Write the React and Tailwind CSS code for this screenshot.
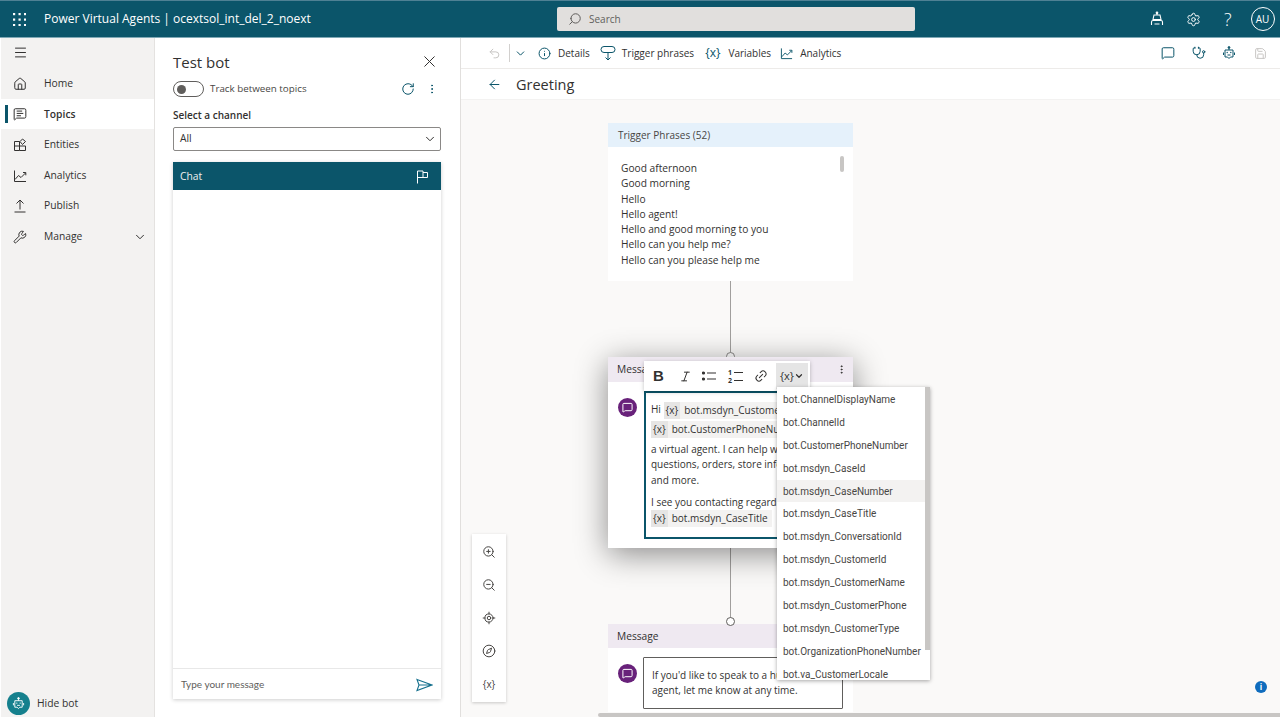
import React from "react";
import {
  ArrowLeft,
  ChevronDown,
  Home,
  Info,
  Italic,
  Link2,
  Menu,
  RotateCw,
  MoreVertical,
  Search,
  Settings,
  Wrench,
  X,
  ZoomIn,
  ZoomOut,
  Save,
  Undo2,
  LocateFixed,
  Compass,
  Stethoscope,
  MessageSquare,
  MessageSquareText,
} from "lucide-react";

const EntitiesIcon = ({ size = 14 }) => (
  <svg width={size} height={size} viewBox="0 0 14 14" fill="none" stroke="currentColor" strokeWidth="1">
    <path d="M1.500 3.500h5v9h-5zM1.500 8h11v4.500h-6M9.500 1l3 2.500-3 3-2.500-3z" />
  </svg>
);

const TrendIcon = ({ size = 14, color = "currentColor" }) => (
  <svg width={size} height={size} viewBox="0 0 14 14" fill="none" stroke={color} strokeWidth="1">
    <path d="M1.500 1.500v11h11.500M2 10.500l3.500-4 2.500 2 4.500-4.500M10 3.500h2.800v2.800" />
  </svg>
);

const PublishIcon = ({ size = 14 }) => (
  <svg width={size} height={size} viewBox="0 0 14 14" fill="none" stroke="currentColor" strokeWidth="1">
    <path d="M7 10.500V1M3.500 4.500L7 1l3.500 3.500M1.500 13h11" />
  </svg>
);

const navItems = [
  { label: "Home", icon: <Home size={14} strokeWidth={1} absoluteStrokeWidth /> },
  { label: "Topics", icon: <MessageSquareText size={14} strokeWidth={1} absoluteStrokeWidth />, active: true },
  { label: "Entities", icon: <EntitiesIcon /> },
  { label: "Analytics", icon: <TrendIcon /> },
  { label: "Publish", icon: <PublishIcon /> },
  { label: "Manage", icon: <Wrench size={14} strokeWidth={1} absoluteStrokeWidth />, chevron: true },
];

const phrases = [
  "Good afternoon",
  "Good morning",
  "Hello",
  "Hello agent!",
  "Hello and good morning to you",
  "Hello can you help me?",
  "Hello can you please help me",
];

const variables = [
  "bot.ChannelDisplayName",
  "bot.ChannelId",
  "bot.CustomerPhoneNumber",
  "bot.msdyn_CaseId",
  "bot.msdyn_CaseNumber",
  "bot.msdyn_CaseTitle",
  "bot.msdyn_ConversationId",
  "bot.msdyn_CustomerId",
  "bot.msdyn_CustomerName",
  "bot.msdyn_CustomerPhone",
  "bot.msdyn_CustomerType",
  "bot.OrganizationPhoneNumber",
  "bot.va_CustomerLocale",
];

const GridDots = () => (
  <svg width="13" height="13" viewBox="0 0 13 13" fill="white">
    {[1, 6.500, 12].map((y) =>
      [1, 6.500, 12].map((x) => <rect key={`${x}-${y}`} x={x - 1} y={y - 1} width="2.200" height="2.200" />)
    )}
  </svg>
);

const TriggerIcon = () => (
  <svg width="16" height="16" viewBox="0 0 16 16" fill="none" stroke="#0b556a" strokeWidth="1">
    <rect x="1" y="1.500" width="14" height="6" rx="3" />
    <path d="M8 7.500V15M5.500 12.500L8 15l2.500-2.500" />
  </svg>
);

const HeaderBot = () => (
  <svg width="16" height="16" viewBox="0 0 16 16" fill="none" stroke="white" strokeWidth="1.100">
    <circle cx="8" cy="1.800" r="0.800" fill="white" />
    <path d="M8 2.500v1.500M5 4h6l1 4.500H4zM2.500 14v-3a1.500 1.500 0 0 1 1.500-1.500h8a1.500 1.500 0 0 1 1.500 1.500v3M5.500 13h5" />
  </svg>
);

const RobotFace = ({ color, size = 14 }) => (
  <svg width={size} height={size} viewBox="0 0 14 14" fill="none" stroke={color} strokeWidth="1">
    <circle cx="7" cy="1.500" r="0.900" fill={color} />
    <path d="M7 2.500V4M3 4h8v7H8.500L7 12.500 5.500 11H3zM1.500 6.500v2.500M12.500 6.500v2.500M5.500 9h3" />
    <circle cx="5.200" cy="6.500" r="0.700" fill={color} stroke="none" />
    <circle cx="8.800" cy="6.500" r="0.700" fill={color} stroke="none" />
  </svg>
);

const FlagIcon = () => (
  <svg width="13" height="14" viewBox="0 0 13 14" fill="none" stroke="white" strokeWidth="1">
    <path d="M1.500 13.500V1h5.500v6.500H1.500M7 2.500h4.500v5H7" />
  </svg>
);

const SendIcon = () => (
  <svg width="17" height="14" viewBox="0 0 17 14" fill="none" stroke="#15708d" strokeWidth="1.100">
    <path d="M1 1.500L16 7 1 12.500 3 7zM3 7h13" />
  </svg>
);

const BulletsIcon = () => (
  <svg width="14" height="12" viewBox="0 0 14 12" fill="#323130" stroke="#323130" strokeWidth="1.200">
    <circle cx="1.500" cy="3" r="1" />
    <circle cx="1.500" cy="9" r="1" />
    <path d="M5 3h9M5 9h9" />
  </svg>
);

const NumbersIcon = () => (
  <div className="flex w-[15px] flex-col text-[7px] leading-[7px] font-bold">
    <div className="flex items-center gap-[2px]">1<div className="h-px flex-1 bg-[#323130]" /></div>
    <div className="mt-[1px] flex items-center gap-[2px]">2<div className="h-px flex-1 bg-[#323130]" /></div>
  </div>
);

const Chip = ({ children }) => (
  <span className="inline-flex h-[17px] items-center bg-[#f3f2f1] pr-1 align-middle">
    <span className="mr-[4px] bg-[#e6e5e4] px-[2px] leading-[17px]">{"{x}"}</span>
    {children}
  </span>
);

const Avatar = () => (
  <div className="mt-[7px] flex h-[19px] w-[19px] shrink-0 items-center justify-center rounded-full bg-[#68217a]">
    <MessageSquare size={11} color="white" strokeWidth={1} absoluteStrokeWidth />
  </div>
);

const App = () => {
  return (
    <div
      className="flex h-[720px] w-[1280px] flex-col overflow-hidden bg-white text-[#323130]"
      style={{ fontFamily: '"Open Sans", sans-serif' }}
    >
      {/* top bar */}
      <div className="flex h-[38px] shrink-0 items-center border-t border-t-[#4f8194] border-b border-b-[#7fa8b5] bg-[#0b556a] pl-[13px] text-white">
        <GridDots />
        <div className="ml-[18px] w-[513px] text-[12px] whitespace-nowrap">Power Virtual Agents | ocextsol_int_del_2_noext</div>
        <div className="flex h-[24px] w-[358px] items-center rounded-[2px] bg-[#e1dfdd] pl-[11px] text-[10px] text-[#605e5c]">
          <Search size={14} strokeWidth={1} absoluteStrokeWidth className="-scale-x-100" />
          <span className="ml-[7px]">Search</span>
        </div>
        <div className="ml-[234px] flex items-center">
          <HeaderBot />
          <Settings size={15} strokeWidth={1} absoluteStrokeWidth className="ml-[21px]" />
          <span className="ml-[23px] text-[18px] leading-none font-light">?</span>
          <div className="ml-[19px] flex h-[24px] w-[24px] items-center justify-center rounded-full border border-white text-[10px]">AU</div>
        </div>
      </div>

      <div className="flex min-h-0 flex-1 pb-[3px] pl-[1px]">
        {/* nav */}
        <div className="flex w-[154px] shrink-0 flex-col border-r border-r-[#e4e2e0] bg-[#f3f2f1]">
          <div className="flex h-[29px] shrink-0 items-center pl-[12px]">
            <Menu size={15} strokeWidth={1} absoluteStrokeWidth />
          </div>
          <div className="mt-[1px] flex flex-col">
            {navItems.map((item) => (
              <div key={item.label} className={`relative flex h-[30.600px] items-center pt-[1px] pl-[12px] text-[10.300px] ${item.active ? "bg-white font-semibold" : ""}`}>
                {item.active && <div className="absolute top-[6px] left-[4px] h-[18px] w-[3px] bg-[#0b556a]" />}
                {item.icon}
                <span className="ml-[17px]">{item.label}</span>
                {item.chevron && <ChevronDown size={14} strokeWidth={1} absoluteStrokeWidth className="ml-auto mr-[7px]" />}
              </div>
            ))}
          </div>
          <div className="mt-auto mb-[2px] flex items-center pl-[6px] text-[10.300px]">
            <div className="flex h-[23px] w-[23px] items-center justify-center rounded-full bg-[#15808d]">
              <RobotFace color="white" size={13} />
            </div>
            <span className="ml-[7px]">Hide bot</span>
          </div>
        </div>

        {/* test bot panel */}
        <div className="flex w-[306px] shrink-0 flex-col border-r border-r-[#e1dfdd] pr-[19px] pb-[18px] pl-[18px]">
          <div className="flex h-[43px] shrink-0 items-start justify-between pt-[14px]">
            <span className="text-[15px] leading-[20px]">Test bot</span>
            <X size={19} strokeWidth={1} absoluteStrokeWidth className="mr-[2px]" />
          </div>
          <div className="flex h-[16px] items-center">
            <div className="flex h-[16px] w-[31px] items-center rounded-full border border-[#605e5c] pl-[3px]">
              <div className="h-[9px] w-[9px] rounded-full bg-[#605e5c]" />
            </div>
            <span className="ml-[6px] text-[9.800px] text-[#484644]">Track between topics</span>
            <RotateCw size={14} strokeWidth={1} absoluteStrokeWidth color="#0b556a" className="ml-auto mr-[11px]" />
            <MoreVertical size={12} strokeWidth={1} absoluteStrokeWidth color="#0b556a" className="mr-[3px]" />
          </div>
          <div className="mt-[11px] text-[10px] font-semibold">Select a channel</div>
          <div className="mt-[4px] flex h-[24px] items-center justify-between rounded-[2px] border border-[#8a8886] pr-[3px] pl-[6px] text-[10.300px]">
            All
            <ChevronDown size={14} strokeWidth={1} absoluteStrokeWidth />
          </div>
          <div className="mt-[11px] flex min-h-0 flex-1 flex-col shadow-[0_1px_4px_rgba(0,0,0,0.2)]">
            <div className="flex h-[28px] shrink-0 items-center justify-between bg-[#0b556a] pt-[2px] pr-[12px] pl-[7px] text-[10.300px] text-[#f0f0f0]">
              Chat
              <FlagIcon />
            </div>
            <div className="flex-1" />
            <div className="flex h-[31px] shrink-0 items-center justify-between border-t border-t-[#e8e8e8] pt-[1px] pr-[8px] pl-[8px] text-[10px] text-[#605e5c]" style={{ fontFamily: "Lato, sans-serif" }}>
              Type your message
              <SendIcon />
            </div>
          </div>
        </div>

        {/* editor */}
        <div className="flex min-w-0 flex-1 flex-col">
          <div className="flex h-[31px] shrink-0 items-center border-b border-b-[#edebe9] pl-[27px] text-[10px]">
            <Undo2 size={13} strokeWidth={1} absoluteStrokeWidth color="#c8c6c4" />
            <div className="ml-[8px] h-[18px] w-px bg-[#d2d0ce]" />
            <ChevronDown size={13} strokeWidth={1} absoluteStrokeWidth className="ml-[4px]" color="#0b556a" />
            <Info size={13} strokeWidth={1} absoluteStrokeWidth color="#0b556a" className="ml-[11px]" />
            <span className="ml-[7px]">Details</span>
            <span className="ml-[10px]"><TriggerIcon /></span>
            <span className="ml-[6px]">Trigger phrases</span>
            <span className="ml-[11px] text-[12px] text-[#0b556a]">{"{x}"}</span>
            <span className="ml-[8px]">Variables</span>
            <span className="ml-[9px]"><TrendIcon size={13} color="#0b556a" /></span>
            <span className="ml-[7px]">Analytics</span>
            <div className="ml-auto flex items-center pr-[13px]">
              <MessageSquare size={14} strokeWidth={1} absoluteStrokeWidth color="#0b556a" />
              <Stethoscope size={14} strokeWidth={1} absoluteStrokeWidth color="#0b556a" className="ml-[17px]" />
              <span className="ml-[16px]"><RobotFace color="#0b556a" /></span>
              <Save size={13} strokeWidth={1} absoluteStrokeWidth color="#c8c6c4" className="ml-[18px]" />
            </div>
          </div>
          <div className="flex h-[31px] shrink-0 items-center border-b border-b-[#f3f2f1] pl-[26px]">
            <ArrowLeft size={15} strokeWidth={1} absoluteStrokeWidth color="#0b556a" />
            <span className="ml-[14px] pt-[2px] text-[14.500px]">Greeting</span>
          </div>

          {/* canvas */}
          <div className="relative min-h-0 flex-1 overflow-hidden bg-[#faf9f8]">
            <div className="ml-[147px] flex w-[245px] flex-col pt-[23px] text-[10.200px]">
              <div className="relative h-[158px] shrink-0 bg-white">
                <div className="flex h-[24px] items-center bg-[#e5f1fb] pl-[10px] text-[10px] text-[#484644]">Trigger Phrases (52)</div>
                <div className="mt-[14px] pl-[13px] leading-[15.300px]">
                  {phrases.map((p) => (
                    <div key={p}>{p}</div>
                  ))}
                </div>
                <div className="absolute top-[33px] right-[9px] h-[16px] w-[4px] rounded-full bg-[#c8c6c4]" />
              </div>

              <div className="relative mx-auto h-[76px] w-px shrink-0 bg-[#a19f9d]">
                <div className="absolute bottom-[-4px] left-[-4px] h-[9px] w-[9px] rounded-full border border-[#8a8886] bg-white" />
              </div>

              <div className="relative z-10 flex h-[191px] shrink-0 flex-col bg-white shadow-[0_6px_30px_rgba(0,0,0,0.45)]">
                <div className="flex h-[25px] shrink-0 items-center justify-between bg-[#efe9f1] pr-[6px] pl-[9px]">
                  Message
                  <MoreVertical size={11} strokeWidth={1} absoluteStrokeWidth />
                </div>
                <div className="flex pt-[9px] pl-[10px]">
                  <Avatar />
                  <div className="ml-[7px] h-[148px] w-[199px] overflow-hidden border-2 border-[#0b556a] pt-[9px] pl-[5px] text-[10px] leading-[15.300px] whitespace-nowrap">
                    <div className="h-[19px]">Hi <Chip>bot.msdyn_CustomerName</Chip></div>
                    <div className="h-[19px]"><Chip>bot.CustomerPhoneNumber</Chip></div>
                    <div className="mt-[2px]">a virtual agent. I can help with</div>
                    <div>questions, orders, store info</div>
                    <div>and more.</div>
                    <div className="mt-[7px]">I see you contacting regarding</div>
                    <div><Chip>bot.msdyn_CaseTitle</Chip></div>
                  </div>
                </div>
              </div>

              <div className="relative mx-auto h-[76px] w-px shrink-0 bg-[#a19f9d]">
                <div className="absolute bottom-[-2px] left-[-4px] h-[9px] w-[9px] rounded-full border border-[#605e5c] bg-white" />
              </div>

              <div className="flex h-[88px] shrink-0 flex-col bg-white">
                <div className="flex h-[24px] shrink-0 items-center bg-[#efe9f1] pt-[1px] pl-[9px]">Message</div>
                <div className="flex pt-[9px] pl-[10px]">
                  <Avatar />
                  <div className="ml-[6px] h-[52px] w-[200px] rounded-[1px] border border-[#605e5c] pt-[10px] pl-[8px] text-[10px] leading-[15.300px] whitespace-nowrap">
                    <div>If you'd like to speak to a human</div>
                    <div>agent, let me know at any time.</div>
                  </div>
                </div>
              </div>
            </div>

            {/* format toolbar */}
            <div className="absolute top-[261px] left-[183px] z-20 flex h-[30px] w-[166px] items-center bg-white pl-[9px] shadow-[0_1px_4px_rgba(0,0,0,0.25)]">
              <span className="w-[11px] text-[15px] font-bold" style={{ fontFamily: '"Liberation Sans", sans-serif' }}>B</span>
              <Italic size={13} strokeWidth={1} absoluteStrokeWidth className="ml-[15px]" />
              <span className="ml-[10px]"><BulletsIcon /></span>
              <span className="ml-[12px]"><NumbersIcon /></span>
              <Link2 size={14} strokeWidth={1} absoluteStrokeWidth className="ml-[11px] -rotate-45" />
              <div className="ml-[8px] flex h-[26px] w-[32px] items-center justify-center bg-[#e5e5e5] text-[11px]">
                {"{x}"}
                <ChevronDown size={10} strokeWidth={1.200} absoluteStrokeWidth />
              </div>
            </div>

            {/* variable dropdown */}
            <div className="absolute top-[287px] left-[316px] z-30 h-[293px] w-[153px] overflow-hidden bg-white pt-px text-[10px] text-[#484644] shadow-[0_1px_4px_rgba(0,0,0,0.35)]" style={{ fontFamily: "Roboto, sans-serif" }}>
              {variables.map((v) => (
                <div key={v} className={`flex h-[22.900px] items-center pl-[6px] whitespace-nowrap ${v === "bot.msdyn_CaseNumber" ? "mr-[5px] bg-[#f3f2f1]" : ""}`}>
                  {v}
                </div>
              ))}
              <div className="absolute top-0 right-0 h-[263px] w-[5px] bg-[#c8c6c4]" />
            </div>

            {/* zoom tools */}
            <div className="absolute top-[434px] left-[11px] flex h-[168px] w-[34px] flex-col items-center justify-around bg-white py-[1px] text-[10px] text-[#484644] shadow-[0_1px_3px_rgba(0,0,0,0.2)]">
              <ZoomIn size={14} strokeWidth={1} absoluteStrokeWidth />
              <ZoomOut size={14} strokeWidth={1} absoluteStrokeWidth />
              <LocateFixed size={14} strokeWidth={1} absoluteStrokeWidth />
              <Compass size={14} strokeWidth={1} absoluteStrokeWidth />
              <span>{"{x}"}</span>
            </div>

            <div className="absolute top-[581px] left-[794px] flex h-[12px] w-[12px] items-center justify-center rounded-full bg-[#0f6cbd] text-[8px] font-bold text-white">i</div>
            <div className="absolute bottom-0 left-[137px] h-[4px] w-[690px] rounded-full bg-[#c8c6c4]" />
          </div>
        </div>
      </div>
    </div>
  );
};

export default App;
